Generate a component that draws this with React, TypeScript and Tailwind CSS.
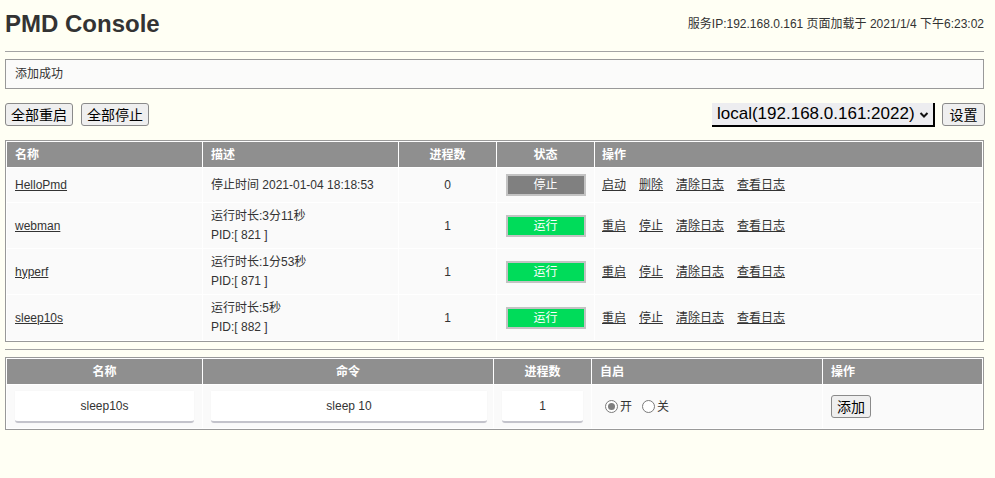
import React from "react";

const procs = [
  {
    name: "HelloPmd",
    desc: ["停止时间 2021-01-04 18:18:53"],
    count: 0,
    running: false,
  },
  { name: "webman", desc: ["运行时长:3分11秒", "PID:[ 821 ]"], count: 1, running: true },
  { name: "hyperf", desc: ["运行时长:1分53秒", "PID:[ 871 ]"], count: 1, running: true },
  { name: "sleep10s", desc: ["运行时长:5秒", "PID:[ 882 ]"], count: 1, running: true },
];

const Btn = ({ children, className = "" }: { children: React.ReactNode; className?: string }) => (
  <button
    className={
      "h-[23px] px-[5px] border border-[#8a8a8a] rounded-[3px] bg-[#efefef] text-[14px] leading-[20px] text-black " +
      className
    }
  >
    {children}
  </button>
);

const Radio = ({ checked, label }: { checked?: boolean; label: string }) => (
  <label className="inline-flex items-center gap-[2px]">
    <span className="w-[13px] h-[13px] rounded-full border border-[#7a7a7a] bg-white flex items-center justify-center">
      {checked && <span className="w-[7px] h-[7px] rounded-full bg-[#7f7f7f]" />}
    </span>
    <span>{label}</span>
  </label>
);

const Field = ({ value, className = "" }: { value: string; className?: string }) => (
  <input
    type="text"
    readOnly
    value={value}
    className={
      "h-[32px] bg-white border-b-2 border-[#c3c3cb] rounded-b-[3px] shadow-[0_0_2px_rgba(0,0,0,0.03)] text-center text-[12px] text-[#333] outline-none " +
      className
    }
  />
);

export default function App() {
  return (
    <div className="min-h-[478px] bg-[#fffff4] font-[family-name:Liberation_Sans,Noto_Sans_CJK_SC,sans-serif] text-[#333]">
      <div className="w-[979px] ml-[5px]">
        {/* header */}
        <div className="h-[48px] flex items-center justify-between">
          <h1 className="text-[24px] leading-[28px] font-bold text-[#333]">PMD Console</h1>
          <div className="text-[12px] leading-[16px] text-[#333]">
            服务IP:192.168.0.161 页面加载于 2021/1/4 下午6:23:02
          </div>
        </div>
        <div className="mt-[3px] h-px bg-[#a3a3a3]" />

        {/* message */}
        <div className="mt-[7px] h-[30px] border border-[#999] bg-[#fbfbfa] pl-[9px] flex items-center text-[12px]">
          添加成功
        </div>

        {/* toolbar */}
        <div className="mt-[14px] h-[24px] flex items-start justify-between">
          <div className="flex gap-[8px]">
            <Btn>全部重启</Btn>
            <Btn>全部停止</Btn>
          </div>
          <div className="flex items-start gap-[7px] mr-[-1px]">
            <div className="w-[223px] h-[24px] bg-[#ededf0] border-b-2 border-r-2 border-black flex items-center pl-[5px] pr-[4px] text-[17px] leading-[22px] text-black">
              <span className="flex-1 whitespace-nowrap">local(192.168.0.161:2022)</span>
              <svg width="10" height="8" viewBox="0 0 10 8" className="shrink-0 mt-[1px]">
                <path d="M1.5 2 L5 5.5 L8.5 2" fill="none" stroke="#111" strokeWidth="2" />
              </svg>
            </div>
            <Btn className="w-[43px] px-0">设置</Btn>
          </div>
        </div>

        {/* process table */}
        <table className="mt-[13px] w-[979px] table-fixed border-separate border-spacing-[1px] border border-[#999] bg-white text-[12px]">
          <thead>
            <tr className="h-[25px] bg-[#8f8f8f] text-white font-bold">
              <th className="w-[195px] text-left px-[8px]">名称</th>
              <th className="w-[195px] text-left px-[8px]">描述</th>
              <th className="w-[97px] text-center">进程数</th>
              <th className="w-[97px] text-center">状态</th>
              <th className="text-left px-[7px]">操作</th>
            </tr>
          </thead>
          <tbody>
            {procs.map((p, i) => (
              <tr key={p.name} className={(i === 0 ? "h-[34px]" : "h-[45px]") + " bg-[#fafafa]"}>
                <td className="px-[8px]">
                  <a href="#" className="underline text-[#333]">
                    {p.name}
                  </a>
                </td>
                <td className="px-[8px] leading-[19px]">
                  {p.desc.map((d) => (
                    <div key={d}>{d}</div>
                  ))}
                </td>
                <td className="text-center">{p.count}</td>
                <td>
                  <div
                    className={
                      "mx-auto w-[80px] h-[22px] border-2 border-[#c3c3c3] text-white flex items-center justify-center " +
                      (p.running ? "bg-[#00dc5a]" : "bg-[#808080]")
                    }
                  >
                    {p.running ? "运行" : "停止"}
                  </div>
                </td>
                <td className="px-[7px]">
                  <div className="flex gap-[13px]">
                    {(p.running
                      ? ["重启", "停止", "清除日志", "查看日志"]
                      : ["启动", "删除", "清除日志", "查看日志"]
                    ).map((a) => (
                      <a key={a} href="#" className="underline text-[#333]">
                        {a}
                      </a>
                    ))}
                  </div>
                </td>
              </tr>
            ))}
          </tbody>
        </table>

        <div className="mt-[7px] h-px bg-[#a3a3a3]" />

        {/* add form */}
        <table className="mt-[7px] w-[979px] table-fixed border-separate border-spacing-[1px] border border-[#999] bg-white text-[12px]">
          <thead>
            <tr className="h-[25px] bg-[#8f8f8f] text-white font-bold">
              <th className="w-[195px] text-center">名称</th>
              <th className="w-[290px] text-center">命令</th>
              <th className="w-[97px] text-center">进程数</th>
              <th className="w-[230px] text-left px-[8px]">自启</th>
              <th className="text-left px-[8px]">操作</th>
            </tr>
          </thead>
          <tbody>
            <tr className="h-[43px] bg-[#fafafa]">
              <td className="px-[8px]">
                <Field value="sleep10s" className="w-[179px]" />
              </td>
              <td className="px-[8px]">
                <Field value="sleep 10" className="w-[276px]" />
              </td>
              <td className="px-[8px]">
                <Field value="1" className="w-[81px]" />
              </td>
              <td className="px-[13px]">
                <div className="flex items-center gap-[10px] text-[12px]">
                  <Radio checked label="开" />
                  <Radio label="关" />
                </div>
              </td>
              <td className="px-[8px]">
                <Btn className="h-[22px]">添加</Btn>
              </td>
            </tr>
          </tbody>
        </table>
      </div>
    </div>
  );
}
